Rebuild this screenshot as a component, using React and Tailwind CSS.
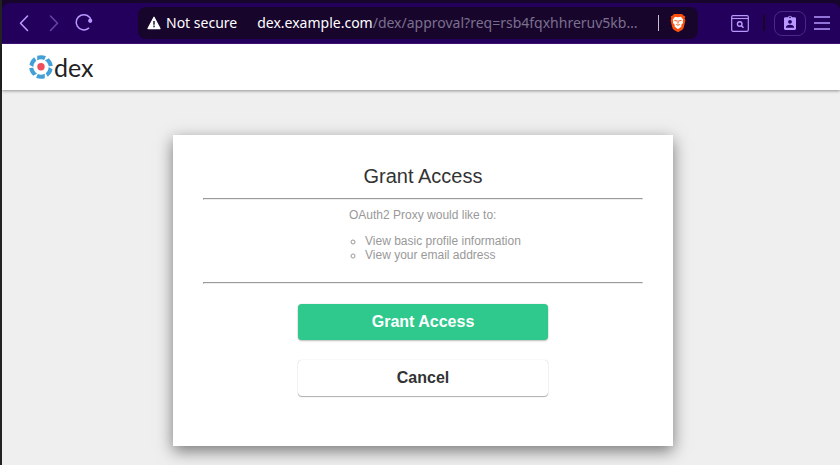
import React from "react";

function BackIcon() {
  return (
    <svg width="24" height="24" viewBox="0 0 24 24" fill="none" stroke="currentColor" strokeWidth="1.6" strokeLinecap="round" strokeLinejoin="round" aria-hidden="true">
      <path d="M15.5 5 8.5 12.2l7 7.3" />
    </svg>
  );
}

function ForwardIcon() {
  return (
    <svg width="24" height="24" viewBox="0 0 24 24" fill="none" stroke="currentColor" strokeWidth="1.6" strokeLinecap="round" strokeLinejoin="round" aria-hidden="true">
      <path d="m8.5 5 7 7.2-7 7.3" />
    </svg>
  );
}

function ReloadIcon() {
  return (
    <svg width="24" height="24" viewBox="0 0 24 24" fill="none" aria-hidden="true">
      <path d="M16.6 17.2A7.6 7.6 0 1 1 19.2 9.5" stroke="currentColor" strokeWidth="1.5" strokeLinecap="round" />
      <circle cx="18.2" cy="9.8" r="2.1" fill="currentColor" />
    </svg>
  );
}

function WarningIcon() {
  return (
    <svg width="14" height="14" viewBox="0 0 14 14" aria-hidden="true">
      <path d="M7 1.2 13 12.6H1Z" fill="#fff" stroke="#fff" strokeWidth="1.2" strokeLinejoin="round" />
      <path d="M7 5v3.7M7 9.6v1.6" stroke="#17052c" strokeWidth="1.4" />
    </svg>
  );
}

function ShieldLionIcon() {
  return (
    <svg width="16" height="20" viewBox="0 0 16 20" aria-hidden="true">
      <path d="M4 1h8l1.5 1.6 1.8 1-.6 2 .7 2-1.6 6.6c-.4 1.4-1.2 2.3-2.3 3L8 19.3l-3.5-2.1c-1.1-.7-1.9-1.6-2.3-3L.6 7.6l.7-2-.6-2 1.8-1Z" fill="#fb4f0b" />
      <path d="M5.1 3.8 8 4.3l2.9-.5 2.3 2.8-.4 1.6.2 1.7-1.8 2.2.3 1.5L8 16.2l-3.5-2.6.3-1.5L3 9.9l.2-1.7-.4-1.6Z" fill="#fff" />
      <path d="M4.5 7.4 7 8M11.5 7.4 9 8M8 7.4v3.2M6.3 11.4l1.7.9 1.7-.9" stroke="#fb4f0b" strokeWidth="1" fill="none" />
    </svg>
  );
}

function PageSearchIcon() {
  return (
    <svg width="18" height="17" viewBox="0 0 18 17" fill="none" stroke="currentColor" aria-hidden="true">
      <rect x="0.7" y="0.7" width="16.6" height="15.6" rx="1.2" strokeWidth="1.2" />
      <path d="M1 3.5h16" strokeWidth="1.1" />
      <circle cx="8.7" cy="9" r="2.3" strokeWidth="1.4" />
      <path d="m10.3 10.6 2.2 2.2" strokeWidth="1.5" />
    </svg>
  );
}

function BadgeIcon() {
  return (
    <svg width="14" height="16" viewBox="0 0 14 16" aria-hidden="true">
      <path d="M2.4 2.2h2.5a2.2 2.2 0 0 1 4.2 0h2.5c.8 0 1.4.6 1.4 1.4v10c0 .8-.6 1.4-1.4 1.4H2.4c-.8 0-1.4-.6-1.4-1.4v-10c0-.8.6-1.4 1.4-1.4Z" fill="currentColor" />
      <circle cx="7" cy="2.4" r="0.8" fill="#23005c" />
      <circle cx="7" cy="6.8" r="1.9" fill="#23005c" />
      <path d="M3 12.8v-1c0-1.3 2.6-2 4-2s4 .7 4 2v1Z" fill="#23005c" />
    </svg>
  );
}

function MenuIcon() {
  return (
    <svg width="18" height="16" viewBox="0 0 18 16" stroke="currentColor" strokeWidth="1.6" aria-hidden="true">
      <path d="M1 2h16M1 8h16M1 14h16" />
    </svg>
  );
}

const petals = [0, 60, 120, 180, 240, 300];

function DexLogo() {
  return (
    <span className="flex items-center gap-px" aria-label="dex">
      <svg width="24" height="24" viewBox="0 0 24 24" aria-hidden="true">
        {petals.map((angle) => (
          <path key={angle} d="M6 1.9C8.6.3 11.7-.1 14.6.5L13.6 4.4C11 4 8.9 4.6 6.9 6.3Z" fill="#429fd8" transform={`rotate(${angle + 12} 12 12)`} />
        ))}
        <circle cx="12" cy="11.8" r="3.7" fill="#f04d5c" />
      </svg>
      <span className="font-['Lato',sans-serif] text-[25px] leading-6 text-[#222222]">dex</span>
    </span>
  );
}

function BrowserBar() {
  return (
    <div className="bg-[#17052c] pt-[3px]">
      <div className="flex h-[41px] items-center rounded-t-lg border-b border-[#43127e] bg-[#23005c] pl-[10px] pr-[9px] font-['Noto_Sans','Open_Sans',sans-serif] text-[#b899ff]">
        <div className="flex gap-[6px]">
          <button type="button" aria-label="Back"><BackIcon /></button>
          <button type="button" aria-label="Forward" className="text-[#6543a3]"><ForwardIcon /></button>
          <button type="button" aria-label="Reload"><ReloadIcon /></button>
        </div>
        <div className="ml-[42px] flex h-8 min-w-0 flex-1 items-center rounded-lg bg-[#17052c] pl-[9px] pr-3 text-sm">
          <button type="button" className="flex shrink-0 items-center gap-[5px] text-white">
            <WarningIcon />
            Not secure
          </button>
          <div role="textbox" aria-label="Address" tabIndex={0} className="ml-5 min-w-0 flex-1 truncate text-[#7b708c]">
            <span className="text-white">dex.example.com</span>/dex/approval?req=rsb4fqxhhreruv5kb…
          </div>
          <span className="ml-3 h-4 w-px bg-[#c5c0cb]" />
          <button type="button" aria-label="Shields" className="ml-[11px] shrink-0"><ShieldLionIcon /></button>
        </div>
        <div className="ml-[33px] flex shrink-0 items-center">
          <button type="button" aria-label="Find in page"><PageSearchIcon /></button>
          <span className="ml-[14px] h-4 w-0.5 bg-[#17052c]" />
          <button type="button" aria-label="Profile" className="ml-[9px] flex h-[25px] w-8 items-center justify-center rounded-lg border border-[#4b278c]"><BadgeIcon /></button>
          <button type="button" aria-label="Menu" className="ml-[7px]"><MenuIcon /></button>
        </div>
      </div>
    </div>
  );
}

export default function App() {
  return (
    <div className="flex min-h-screen flex-col border-l-2 border-[#222222] bg-[#efefef] font-['Liberation_Sans',Arial,sans-serif] text-[#333333]">
      <BrowserBar />
      <header className="flex h-[46px] items-center bg-white pl-[27px] shadow-[0_1px_3px_rgba(0,0,0,0.4)]">
        <a href="#"><DexLogo /></a>
      </header>
      <main className="pt-[45px] pr-4 pb-[19px] pl-5">
        <section className="mx-auto max-w-[500px] bg-white px-[30px] pt-[30px] pb-[50px] shadow-[0_5px_15px_rgba(0,0,0,0.5)]">
          <h1 className="text-center text-xl leading-[23px]">Grant Access</h1>
          <hr className="mt-[10px] border border-t-[#9a9a9a] border-r-[#eeeeee] border-b-[#eeeeee] border-l-[#9a9a9a]" />
          <div className="mx-auto mt-2 w-[148px] text-xs leading-[14px] whitespace-nowrap text-[#999999]">
            <p>OAuth2 Proxy would like to:</p>
            <ul className="mt-3 list-[circle] pl-4">
              <li>View basic profile information</li>
              <li>View your email address</li>
            </ul>
          </div>
          <hr className="mt-5 border border-t-[#9a9a9a] border-r-[#eeeeee] border-b-[#eeeeee] border-l-[#9a9a9a]" />
          <div className="mx-auto mt-5 flex max-w-[250px] flex-col gap-5">
            <button type="button" className="h-9 rounded bg-[#2fc98e] text-base font-bold text-white shadow-[0_1px_2px_rgba(0,0,0,0.25),0_0_1px_rgba(0,0,0,0.25)]">Grant Access</button>
            <button type="button" className="h-9 rounded bg-white text-base font-bold shadow-[0_1px_1px_rgba(0,0,0,0.3),0_0_1px_rgba(0,0,0,0.25)]">Cancel</button>
          </div>
        </section>
      </main>
    </div>
  );
}
